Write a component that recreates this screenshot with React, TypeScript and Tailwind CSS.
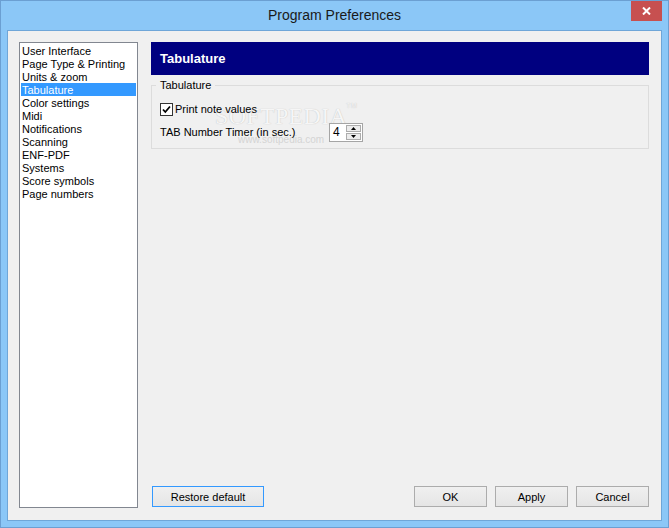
import React from "react";

const items = [
  "User Interface",
  "Page Type & Printing",
  "Units & zoom",
  "Tabulature",
  "Color settings",
  "Midi",
  "Notifications",
  "Scanning",
  "ENF-PDF",
  "Systems",
  "Score symbols",
  "Page numbers",
];

const font = { fontFamily: '"Liberation Sans", Arial, sans-serif' };

const WinButton = ({
  label,
  width,
  focused,
}: {
  label: string;
  width: string;
  focused?: boolean;
}) => (
  <button
    className={`${width} h-[21px] border bg-gradient-to-b from-[#f0f0f0] to-[#e5e5e5] pt-[2px] text-[11px] leading-none text-black ${
      focused ? "border-[#3399ff]" : "border-[#acacac]"
    }`}
  >
    {label}
  </button>
);

const App = () => {
  const selected = "Tabulature";

  return (
    <div
      className="flex h-[528px] w-[669px] flex-col border border-[#6b9fd2] bg-[#8bc7f7]"
      style={font}
    >
      {/* title bar */}
      <div className="relative flex h-[29px] shrink-0 items-center justify-center">
        <span className="text-[14px] text-[#1a1a1a]">Program Preferences</span>
        <div className="absolute right-[6px] top-0 flex h-[20px] w-[31px] items-center justify-center bg-[#c75050]">
          <svg width="9" height="8" viewBox="0 0 9 8">
            <path d="M1 0.5 L8 7.5 M8 0.5 L1 7.5" stroke="#fff" strokeWidth="2" />
          </svg>
        </div>
      </div>

      {/* client */}
      <div className="mx-[6px] mb-[6px] flex flex-1 border border-[#6fa6d8] bg-[#f0f0f0] pb-[12px] pl-[11px] pr-[12px] pt-[11px]">
        {/* list */}
        <div className="w-[119px] shrink-0 border border-[#828790] bg-white p-[1px] text-[11px] text-black">
          {items.map((it) => (
            <div
              key={it}
              className={`h-[13px] whitespace-nowrap pl-[1px] leading-[15px] ${
                it === selected ? "bg-[#3399ff] text-white" : ""
              }`}
            >
              {it}
            </div>
          ))}
        </div>

        {/* right column */}
        <div className="ml-[13px] flex w-[498px] flex-col">
          <div className="flex h-[33px] items-center bg-[#000080] pl-[9px] text-[13px] font-bold text-white">
            Tabulature
          </div>

          <fieldset className="relative mt-[4px] border border-[#dcdcdc] px-[4px] pb-[6px] text-[11px] text-black">
            <legend className="px-[4px] leading-[13px]">Tabulature</legend>

            <div className="pointer-events-none absolute left-[63px] top-[12px] select-none text-[24px] leading-none tracking-[0.3px] text-[#f6f6f6] [font-family:'Liberation_Serif',serif] [text-shadow:0_0_1px_#b8b8b8]">
              SOFTPEDIA
              <span className="absolute -right-[10px] -top-[2px] text-[7px] [font-family:'Liberation_Sans',sans-serif]">
                TM
              </span>
            </div>
            <div className="pointer-events-none absolute left-[86px] top-[40px] select-none text-[10px] text-[#d4d4d4]">
              www.softpedia.com
            </div>

            <div className="relative mt-[11px] flex h-[13px] items-center pl-[4px]">
              <svg width="13" height="13" viewBox="0 0 13 13">
                <rect x="0.5" y="0.5" width="12" height="12" fill="#fff" stroke="#333" />
                <path d="M3 6.5 L5.3 9 L10 3.5" fill="none" stroke="#000" strokeWidth="1.8" />
              </svg>
              <span className="ml-[2px] leading-[13px]">Print note values</span>
            </div>

            <div className="relative mt-[7px] flex items-center pl-[4px]">
              <span className="w-[169px] leading-[13px]">TAB Number Timer (in sec.)</span>
              <div className="flex h-[19px] w-[34px] border border-[#a5a5a5] bg-white">
                <span className="flex-1 pl-[3px] text-[12px] leading-[17px]">4</span>
                <div className="flex w-[16px] flex-col justify-center gap-[1px] py-[1px] pr-[1px]">
                  <div className="flex h-[7px] items-center justify-center border border-[#acacac] bg-[#ececec]">
                    <svg width="5" height="3" viewBox="0 0 5 3">
                      <path d="M2.5 0 L5 3 L0 3 Z" fill="#000" />
                    </svg>
                  </div>
                  <div className="flex h-[7px] items-center justify-center border border-[#acacac] bg-[#ececec]">
                    <svg width="5" height="3" viewBox="0 0 5 3">
                      <path d="M0 0 L5 0 L2.5 3 Z" fill="#000" />
                    </svg>
                  </div>
                </div>
              </div>
            </div>
          </fieldset>

          <div className="mt-auto flex items-center">
            <div className="ml-[1px]">
              <WinButton label="Restore default" width="w-[112px]" focused />
            </div>
            <div className="ml-auto flex gap-[8px]">
              <WinButton label="OK" width="w-[73px]" />
              <WinButton label="Apply" width="w-[73px]" />
              <WinButton label="Cancel" width="w-[73px]" />
            </div>
          </div>
        </div>
      </div>
    </div>
  );
};

export default App;
